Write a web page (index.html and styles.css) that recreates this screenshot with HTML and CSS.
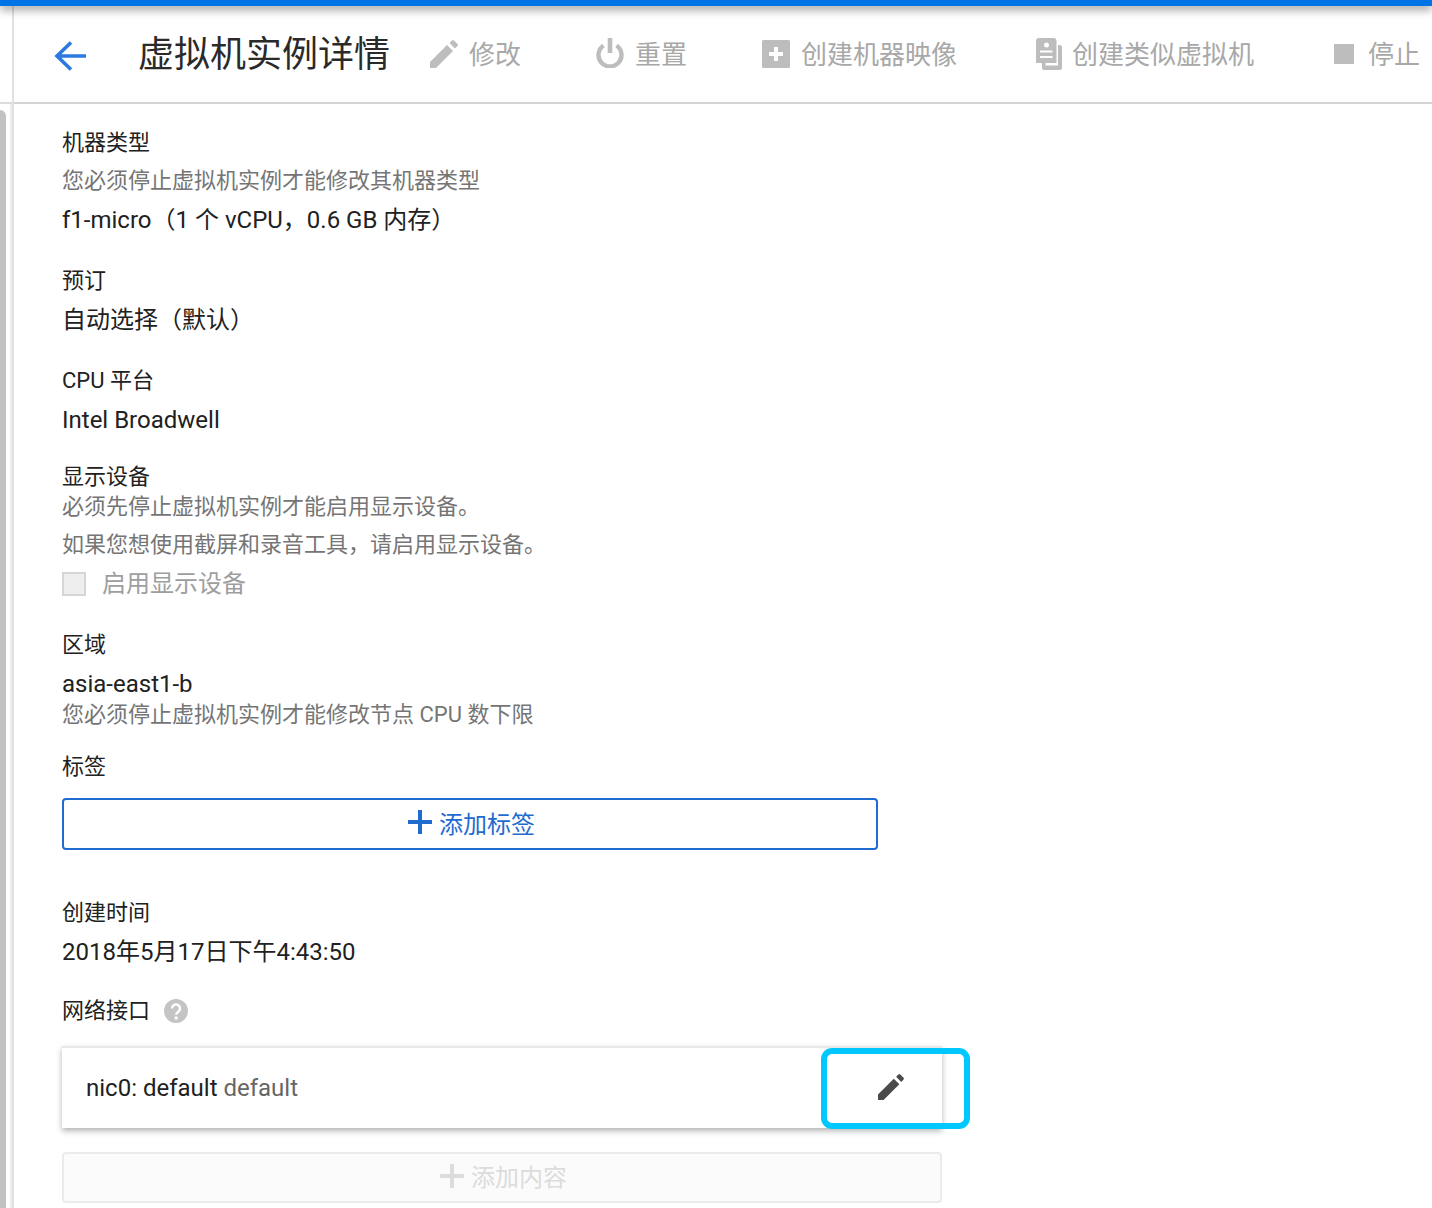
FILE: index.html
```html
<!DOCTYPE html>
<html lang="zh-CN">
<head>
<meta charset="utf-8">
<title>虚拟机实例详情</title>
<link rel="stylesheet" href="styles.css">
</head>
<body>
<div class="topbar"></div>
<div class="shell">
  <aside class="rail">
    <div class="rail-line"></div>
    <div class="rail-body">
      <div class="rail-thumb"></div>
      <div class="rail-track"></div>
    </div>
  </aside>
  <div class="page">
    <header class="header">
      <svg class="back" viewBox="0 0 34 32"><path d="M33 16H4M18 2.500 4 16l14 13.500" fill="none" stroke="#2a7ae2" stroke-width="3.600"/></svg>
      <h1 class="title">虚拟机实例详情</h1>
      <div class="action a-edit">
        <svg class="ico" viewBox="0 0 28 28"><path d="M0 28v-6L17 5l6 6L6 28zM19.500 3 22 .5a1.500 1.500 0 0 1 2 0l3.500 3.500a1.500 1.500 0 0 1 0 2L25 8.500z" fill="#bdbdbd"/></svg>
        <span>修改</span>
      </div>
      <div class="action a-reset">
        <svg class="ico ico-power" viewBox="0 0 28 30"><path d="M7.500 7.500a11.500 11.500 0 1 0 13 0" fill="none" stroke="#bdbdbd" stroke-width="4.400"/><path d="M11.700 0h4.600v15h-4.600z" fill="#bdbdbd"/></svg>
        <span>重置</span>
      </div>
      <div class="action a-image">
        <svg class="ico" viewBox="0 0 28 28"><path d="M1.500 0h25A1.500 1.500 0 0 1 28 1.500v25a1.500 1.500 0 0 1-1.500 1.500h-25A1.500 1.500 0 0 1 0 26.500v-25A1.500 1.500 0 0 1 1.500 0zM12 7v5H7v4h5v5h4v-5h5v-4h-5V7z" fill="#bdbdbd" fill-rule="evenodd"/></svg>
        <span>创建机器映像</span>
      </div>
      <div class="action a-clone">
        <svg class="ico ico-clone" viewBox="0 0 26 32"><path d="M3 0h14.500a3 3 0 0 1 3 3v22H0V3a3 3 0 0 1 3-3zM8 7a2.500 2.500 0 1 0 5 0 2.500 2.500 0 0 0-5 0zM4 12.500v2h12.500v-2zM4 18v2h12.500v-2z" fill="#bdbdbd" fill-rule="evenodd"/><path d="M22 7h1.500A2.500 2.500 0 0 1 26 9.500V30a2 2 0 0 1-2 2H8a2 2 0 0 1-2-2v-5h3.500v2.500H22z" fill="#bdbdbd"/></svg>
        <span>创建类似虚拟机</span>
      </div>
      <div class="action a-stop">
        <span class="stop-square"></span>
        <span>停止</span>
      </div>
    </header>

    <main class="content">
      <section class="field">
        <div class="label">机器类型</div>
        <div class="hint">您必须停止虚拟机实例才能修改其机器类型</div>
        <div class="value">f1-micro（1 个 vCPU，0.6 GB 内存）</div>
      </section>
      <section class="field">
        <div class="label">预订</div>
        <div class="value">自动选择（默认）</div>
      </section>
      <section class="field">
        <div class="label">CPU 平台</div>
        <div class="value">Intel Broadwell</div>
      </section>
      <section class="field display">
        <div class="label tight">显示设备</div>
        <div class="hint tight">必须先停止虚拟机实例才能启用显示设备。</div>
        <div class="hint roomy">如果您想使用截屏和录音工具，请启用显示设备。</div>
        <label class="check"><span class="box"></span><span>启用显示设备</span></label>
      </section>
      <section class="field zone">
        <div class="label">区域</div>
        <div class="value">asia-east1-b</div>
        <div class="hint tight">您必须停止虚拟机实例才能修改节点 CPU 数下限</div>
      </section>
      <section class="field tags">
        <div class="label">标签</div>
        <button class="btn btn-add" type="button"><svg class="plus" viewBox="0 0 24 24"><path d="M10 0h4v10h10v4H14v10h-4V14H0v-4h10z" fill="currentColor"/></svg><span>添加标签</span></button>
      </section>
      <section class="field created">
        <div class="label">创建时间</div>
        <div class="value">2018年5月17日下午4:43:50</div>
      </section>
      <section class="field network">
        <div class="label with-help">网络接口
          <svg class="help" viewBox="0 0 24 24"><circle cx="12" cy="12" r="12" fill="#c4c4c4"/><path d="M8 9.500a4 4 0 1 1 6.300 3.200c-1.300 1-2.100 1.600-2.100 3" fill="none" stroke="#fff" stroke-width="2.400"/><path d="M10.700 17.500h3v3h-3z" fill="#fff"/></svg>
        </div>
        <div class="nic">
          <div class="nic-text">nic0: default <span class="muted">default</span></div>
          <div class="nic-edit"><svg class="nic-pen" viewBox="0 0 28 28"><path d="M0 28v-6L17 5l6 6L6 28zM19.500 3 22 .5a1.500 1.500 0 0 1 2 0l3.500 3.500a1.500 1.500 0 0 1 0 2L25 8.500z" fill="#4a4a4a"/></svg></div>
          <div class="highlight"></div>
        </div>
        <button class="btn btn-disabled" type="button" disabled><svg class="plus" viewBox="0 0 24 24"><path d="M10 0h4v10h10v4H14v10h-4V14H0v-4h10z" fill="currentColor"/></svg><span>添加内容</span></button>
      </section>
    </main>
  </div>
</div>
</body>
</html>
```

FILE: styles.css
```css
* { box-sizing: border-box; }
html, body { margin: 0; height: 1208px; overflow: hidden; background: #fff; }
body {
  font-family: Roboto, "Noto Sans CJK SC", "Liberation Sans", sans-serif;
  color: #212121;
  display: flex;
  flex-direction: column;
}
.topbar {
  height: 6px;
  flex: none;
  background: #0073e6;
  box-shadow: 0 3px 10px rgba(0, 0, 0, .5);
  position: relative;
  z-index: 2;
}
.shell { display: flex; flex: 1; min-height: 0; }
.rail {
  width: 14px;
  flex: none;
  border-right: 2px solid #e0e0e0;
  padding-top: 96px;
}
.rail-line { height: 2px; background: #dcdcdc; }
.rail-body { display: flex; padding-top: 6px; height: 1104px; }
.rail-thumb {
  width: 6px;
  background: #c2c2c2;
  border-radius: 0 8px 0 0;
}
.rail-track { width: 2px; margin-left: 4px; margin-top: -6px; background: #eee; }
.page { flex: 1; min-width: 0; }
.header {
  height: 98px;
  display: flex;
  align-items: center;
  border-bottom: 2px solid #d4d4d4;
  white-space: nowrap;
  overflow: hidden;
  padding-bottom: 4px;
}
.back { width: 34px; height: 32px; margin: 7px 0 0 39px; flex: none; }
.title {
  margin: 6px 0 0 51px;
  font-size: 36px;
  line-height: 48px;
  font-weight: 400;
  color: #2a2a2a;
  flex: none;
  width: 252px;
}
.action {
  display: flex;
  align-items: center;
  font-size: 26px;
  color: #a8a8a8;
  flex: none;
}
.ico { width: 28px; height: 28px; flex: none; margin-top: 4px; }
.a-edit { margin-left: 40px; gap: 11px; }
.a-reset { margin-left: 75px; gap: 11px; }
.ico-power { height: 30px; margin-top: 2px; }
.a-image { margin-left: 75px; gap: 11px; }
.a-clone { margin-left: 79px; gap: 10px; }
.ico-clone { width: 26px; height: 32px; }
.a-stop { margin-left: 80px; gap: 14px; }
.stop-square { width: 20px; height: 20px; margin-top: 3px; background: #bdbdbd; display: block; }

.content { padding: 18px 0 0 48px; }
.field { margin-bottom: 20px; }
.label { font-size: 22px; line-height: 42px; margin-bottom: -2px; color: #212121; }
.hint { font-size: 22px; line-height: 38px; color: #757575; }
.value { font-size: 24px; line-height: 40px; color: #212121; }
.hint.tight { line-height: 30px; }
.label.tight { line-height: 30px; margin-bottom: 0; }
.hint.roomy { line-height: 38px; margin-top: 4px; }
.display { margin-top: 22px; margin-bottom: 20px; }
.check {
  display: flex;
  align-items: center;
  gap: 16px;
  font-size: 24px;
  line-height: 40px;
  color: #9e9e9e;
}
.box {
  width: 24px;
  height: 24px;
  background: #eee;
  border: 2px solid #d6d6d6;
  display: block;
}
.zone { margin-bottom: 16px; }
.zone .hint { margin-top: -4px; }
.btn {
  display: flex;
  align-items: center;
  justify-content: center;
  gap: 7px;
  font: inherit;
  font-size: 24px;
  border-radius: 4px;
  background: #fff;
  padding: 0 0 4px 3px;
}
.plus { width: 24px; height: 24px; flex: none; }
.btn-add {
  width: 816px;
  height: 52px;
  border: 2px solid #1f6bd0;
  color: #1f6bd0;
  margin-top: 12px;
}
.tags { margin-bottom: 42px; }
.created { margin-bottom: 18px; }
.with-help { display: flex; align-items: center; gap: 14px; }
.help { width: 24px; height: 24px; }
.nic {
  width: 880px;
  height: 82px;
  margin-top: 16px;
  display: flex;
  align-items: center;
  justify-content: space-between;
  background: #fff;
  border-top: 2px solid #e8e8e8;
  box-shadow: 0 3px 6px rgba(0, 0, 0, .3);
  position: relative;
}
.nic-text { padding-left: 24px; font-size: 24px; color: #212121; }
.muted { color: #666; }
.nic-edit { width: 104px; display: flex; justify-content: center; padding-left: 2px; }
.nic-pen { width: 26px; height: 26px; margin-top: -2px; }
.highlight {
  position: absolute;
  left: 759px;
  top: 0;
  width: 149px;
  height: 81px;
  border: 6px solid #00c8ff;
  border-radius: 11px;
}
.btn-disabled {
  width: 880px;
  height: 51px;
  margin-top: 24px;
  border: 2px solid #ebebeb;
  background: #fbfbfb;
  color: #dcdcdc;
}
```
